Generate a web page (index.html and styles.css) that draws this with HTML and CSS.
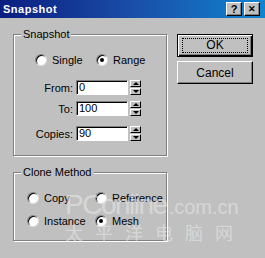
FILE: index.html
```html
<!DOCTYPE html>
<html lang="en">
<head>
    <meta charset="UTF-8">
    <title>Snapshot</title>
    <link rel="stylesheet" href="styles.css">
</head>
<body>
    <div class="window">
        <div class="titlebar">
            <span class="title">Snapshot</span>
            <span class="title-btn">?</span>
            <span class="title-btn close">&#x2715;</span>
        </div>
        <div class="main">
            <div class="left">
                <div class="group snap">
                    <span class="group-label">Snapshot</span>
                    <div class="radio-row">
                        <div class="radio first"><span class="dot"></span>Single</div>
                        <div class="radio"><span class="dot checked"></span>Range</div>
                    </div>
                    <div class="field from">
                        <span class="field-label">From:</span>
                        <span class="input">0</span>
                        <span class="spin"><span class="up"></span><span class="down"></span></span>
                    </div>
                    <div class="field to">
                        <span class="field-label">To:</span>
                        <span class="input">100</span>
                        <span class="spin"><span class="up"></span><span class="down"></span></span>
                    </div>
                    <div class="field copies">
                        <span class="field-label">Copies:</span>
                        <span class="input">90</span>
                        <span class="spin"><span class="up"></span><span class="down"></span></span>
                    </div>
                </div>
                <div class="group clone">
                    <span class="group-label">Clone Method</span>
                    <div class="radio-row">
                        <div class="radio first"><span class="dot"></span>Copy</div>
                        <div class="radio"><span class="dot"></span>Reference</div>
                    </div>
                    <div class="radio-row second">
                        <div class="radio first"><span class="dot"></span>Instance</div>
                        <div class="radio"><span class="dot checked"></span>Mesh</div>
                    </div>
                </div>
            </div>
            <div class="right">
                <div class="btn default"><span class="focus">OK</span></div>
                <div class="btn">Cancel</div>
            </div>
        </div>
        <div class="watermark">
            <div class="wm-top"><span class="wm-big">PConline</span><span class="wm-small">.com.cn</span></div>
            <div class="wm-cn">太平洋电脑网</div>
        </div>
    </div>
</body>
</html>
```

FILE: styles.css
```css
body {
    margin: 0;
    background: #c0c0c0;
    font-family: "Liberation Sans", Arial, sans-serif;
    font-size: 11px;
    color: #000;
}
.window {
    position: relative;
    width: 265px;
    height: 258px;
    background: #c0c0c0;
    overflow: hidden;
}
.titlebar {
    height: 18px;
    display: flex;
    align-items: center;
    padding: 0 5px 0 3px;
    background: linear-gradient(to right, #0a1e80, #1a4ea8 50%, #1084d0);
}
.title {
    flex: 1;
    color: #fff;
    font-weight: bold;
    font-size: 11px;
    letter-spacing: 0.5px;
}
.title-btn {
    width: 14px;
    height: 12px;
    margin-left: 2px;
    background: #c0c0c0;
    border: 1px solid;
    border-color: #fff #000 #000 #fff;
    box-shadow: inset -1px -1px 0 #808080;
    font-weight: bold;
    font-size: 11px;
    line-height: 12px;
    text-align: center;
}
.title-btn.close {
    font-size: 9px;
}
.main {
    display: flex;
    padding: 16px 0 0 13px;
}
.left {
    width: 154px;
}
.group {
    position: relative;
    box-sizing: border-box;
    border: 1px solid #808080;
    box-shadow: inset 1px 1px 0 #fff, 1px 1px 0 #fff;
    padding-top: 19px;
}
.snap {
    height: 122px;
}
.clone {
    margin-top: 16px;
    height: 69px;
}
.group-label {
    position: absolute;
    top: -7px;
    left: 7px;
    padding: 0 2px;
    background: #c0c0c0;
    line-height: 13px;
}
.radio-row {
    display: flex;
    height: 12px;
    padding-left: 21px;
}
.clone .radio-row {
    padding-left: 13px;
}
.clone .radio-row.second {
    margin-top: 11px;
}
.radio {
    display: flex;
    align-items: center;
    gap: 5px;
    line-height: 12px;
}
.snap .radio.first {
    width: 61px;
}
.clone .radio.first {
    width: 68px;
}
.dot {
    position: relative;
    box-sizing: border-box;
    width: 12px;
    height: 12px;
    border-radius: 50%;
    background: #fff;
    border: 1px solid;
    border-color: #808080 #dfdfdf #dfdfdf #808080;
    box-shadow: inset 1px 1px 0 #000;
}
.dot.checked::after {
    content: "";
    position: absolute;
    left: 3px;
    top: 3px;
    width: 4px;
    height: 4px;
    border-radius: 50%;
    background: #000;
}
.field {
    display: flex;
    align-items: center;
    height: 15px;
}
.from {
    margin-top: 14px;
}
.to {
    margin-top: 6px;
}
.copies {
    margin-top: 10px;
}
.field-label {
    width: 59px;
    text-align: right;
    margin-right: 3px;
}
.input {
    box-sizing: border-box;
    width: 52px;
    height: 15px;
    padding-left: 2px;
    background: #fff;
    border: 1px solid;
    border-color: #808080 #fff #fff #808080;
    box-shadow: inset 1px 1px 0 #000;
    line-height: 13px;
}
.spin {
    display: flex;
    flex-direction: column;
    margin-left: 2px;
    width: 11px;
    height: 15px;
}
.spin span {
    position: relative;
    box-sizing: border-box;
    height: 7px;
    border: 1px solid;
    border-color: #fff #000 #000 #fff;
    background: #c0c0c0;
}
.spin .down {
    margin-top: 1px;
}
.spin span::after {
    content: "";
    position: absolute;
    left: 2px;
    width: 0;
    height: 0;
    border-left: 3px solid transparent;
    border-right: 3px solid transparent;
}
.spin .up::after {
    top: 1px;
    border-bottom: 3px solid #000;
}
.spin .down::after {
    top: 1px;
    border-top: 3px solid #000;
}
.right {
    display: flex;
    flex-direction: column;
    gap: 4px;
    margin-left: 10px;
}
.btn {
    box-sizing: border-box;
    width: 76px;
    height: 23px;
    display: flex;
    align-items: center;
    justify-content: center;
    border: 1px solid;
    border-color: #fff #000 #000 #fff;
    box-shadow: inset -1px -1px 0 #808080;
    font-size: 12px;
}
.btn.default {
    border: 1px solid #000;
    box-shadow: inset 1px 1px 0 #fff, inset -1px -1px 0 #000, inset -2px -2px 0 #808080;
}
.focus {
    box-sizing: border-box;
    width: 66px;
    height: 15px;
    border: 1px dotted #000;
    text-align: center;
    line-height: 13px;
}
.watermark {
    position: absolute;
    left: 65px;
    top: 192px;
    color: rgba(235, 235, 235, 0.55);
    pointer-events: none;
}
.wm-top {
    display: flex;
    align-items: baseline;
}
.wm-big {
    font-size: 28px;
    letter-spacing: -1.5px;
    line-height: 26px;
}
.wm-small {
    font-size: 20px;
    margin-left: 2px;
}
.wm-cn {
    font-family: "Noto Sans CJK SC", sans-serif;
    font-weight: 400;
    font-size: 18px;
    letter-spacing: 12px;
    line-height: 20px;
    margin-top: 3px;
}
```
